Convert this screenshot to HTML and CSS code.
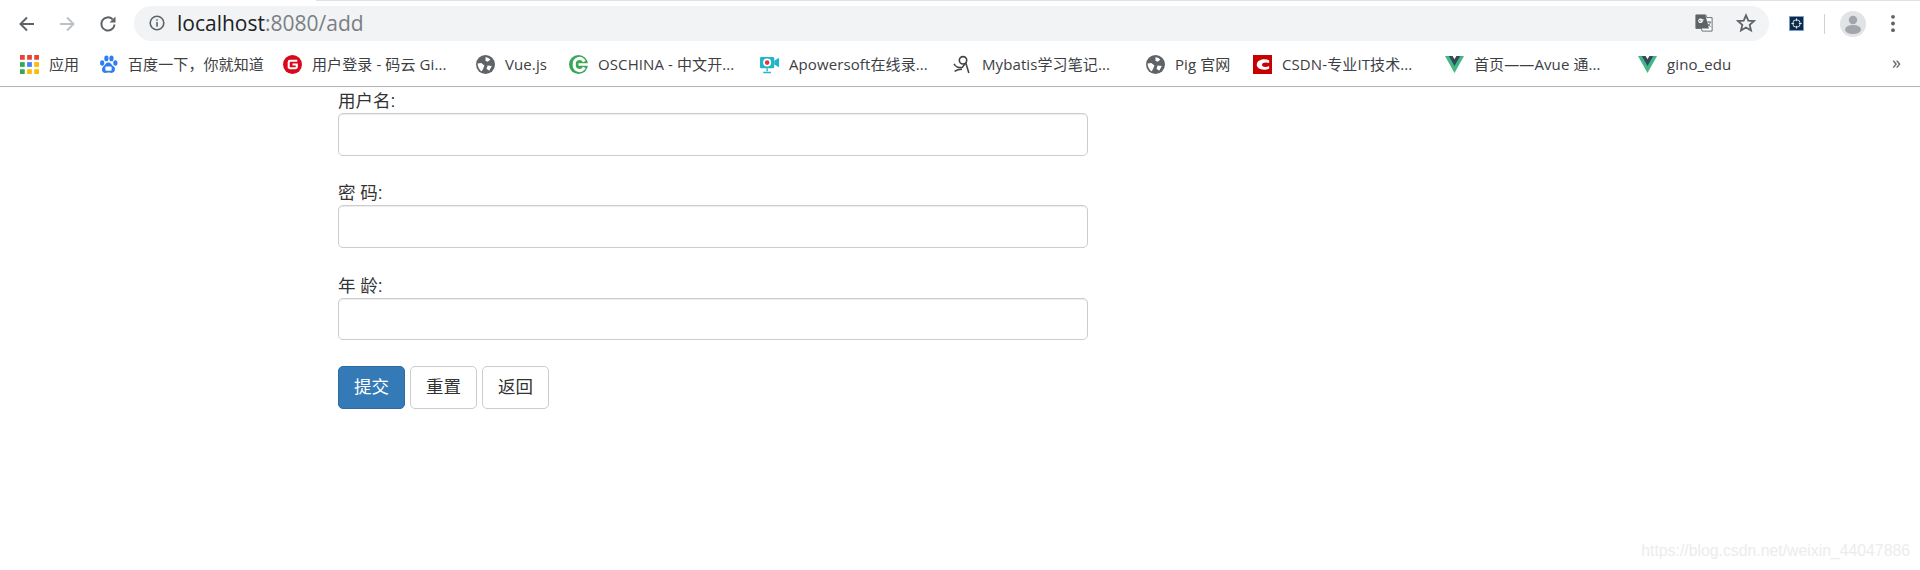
FILE: index.html
```html
<!DOCTYPE html>
<html lang="zh-CN">
<head>
<meta charset="utf-8">
<title>localhost:8080/add</title>
<link rel="stylesheet" href="styles.css">
</head>
<body>
<header class="chrome">
  <div class="tabline"></div>
  <div class="toolbar">
    <svg class="nav back" viewBox="0 0 20 20"><path d="M17 10H4M10 3.5 3.500 10l6.500 6.500" fill="none" stroke="#5f6368" stroke-width="2"/></svg>
    <svg class="nav forward" viewBox="0 0 20 20"><path d="M3 10h13M10 3.500 16.500 10 10 16.500" fill="none" stroke="#bdc1c6" stroke-width="2"/></svg>
    <svg class="nav reload" viewBox="0 0 20 20"><path d="M16.500 10.500a6.600 6.600 0 1 1-1.900-5.200" fill="none" stroke="#5f6368" stroke-width="2"/><path d="M17.500 2.500v6h-6z" fill="#5f6368"/></svg>
    <div class="omnibox">
      <svg class="info" viewBox="0 0 16 16"><circle cx="8" cy="8" r="6.800" fill="none" stroke="#5f6368" stroke-width="1.600"/><path d="M7.200 7h1.600v4.800H7.200zM7.200 4.200h1.600v1.600H7.200z" fill="#5f6368"/></svg>
      <div class="url"><span class="host">localhost</span>:8080/add</div>
      <svg class="translate" viewBox="0 0 20 20"><path d="M1 1h11l1 3h6v15H8l-1-3H1z" fill="#fff" stroke="#5f6368"/><path d="M1 1h10.500l4 15H1z" fill="#5f6368"/><path d="M9.500 6.500H6.500v1.500h1.600a2 2 0 1 1-.6-2" fill="none" stroke="#fff" stroke-width="1.200"/><path d="M13 9h5M15.500 8v1M17 9c-.5 2.500-2 4-3.500 5M14 10.500c.8 1.500 2 2.800 3.500 3.500" fill="none" stroke="#5f6368"/></svg>
      <svg class="star" viewBox="0 0 20 20"><path d="M10 2.300l2.300 5.300 5.700.5-4.300 3.800 1.300 5.600-5-3-5 3 1.300-5.600L2 8.100l5.700-.5z" fill="none" stroke="#5f6368" stroke-width="1.800"/></svg>
    </div>
    <svg class="ext" viewBox="0 0 16 16"><rect width="16" height="16" fill="#0e2a47"/><rect x=".5" y=".5" width="15" height="15" fill="none" stroke="#7fa6d8"/><circle cx="8" cy="8" r="4" fill="none" stroke="#dfe9f5"/><path d="M8 2.500v3M8 10.500v3M2.500 8h3M10.500 8h3" stroke="#dfe9f5"/></svg>
    <div class="divider"></div>
    <svg class="avatar" viewBox="0 0 26 26"><circle cx="13" cy="13" r="13" fill="#e1e3e6"/><circle cx="13" cy="9" r="4.200" fill="#a2a5a9"/><ellipse cx="13" cy="18.500" rx="8" ry="4.500" fill="#a2a5a9"/></svg>
    <svg class="menu" viewBox="0 0 6 20"><circle cx="3" cy="3" r="2" fill="#5f6368"/><circle cx="3" cy="10" r="2" fill="#5f6368"/><circle cx="3" cy="17" r="2" fill="#5f6368"/></svg>
  </div>
  <nav class="bookmarks">
    <a class="bm">
      <svg class="ic" viewBox="0 0 16 16"><rect width="4" height="4" fill="#ea4335"/><rect x="6" width="4" height="4" fill="#ea4335"/><rect x="12" width="4" height="4" fill="#ea4335"/><rect y="6" width="4" height="4" fill="#34a853"/><rect x="6" y="6" width="4" height="4" fill="#4285f4"/><rect x="12" y="6" width="4" height="4" fill="#fbbc05"/><rect y="12" width="4" height="4" fill="#34a853"/><rect x="6" y="12" width="4" height="4" fill="#fbbc05"/><rect x="12" y="12" width="4" height="4" fill="#fbbc05"/></svg>
      <span class="bm-text">应用</span>
    </a>
    <a class="bm">
      <svg class="ic" viewBox="0 0 18 18"><g fill="#2f7ef0"><ellipse cx="3" cy="7.500" rx="2" ry="2.600"/><ellipse cx="7" cy="3.200" rx="2" ry="2.700"/><ellipse cx="11.800" cy="3.200" rx="2" ry="2.700"/><ellipse cx="15.500" cy="7.500" rx="2" ry="2.600"/><path d="M9 7c2.500 0 3 2.500 5 4s1.500 6-2 6c-1.500 0-2-.4-3-.4s-1.500.4-3 .4c-3.500 0-4-4-2-6s2.500-4 5-4z"/></g><rect x="6" y="11" width="6" height="4" rx="1" fill="#fff"/></svg>
      <span class="bm-text">百度一下，你就知道</span>
    </a>
    <a class="bm">
      <svg class="ic" viewBox="0 0 20 20"><circle cx="10" cy="10" r="10" fill="#d6091d"/><path d="M15 6H7.500A1.500 1.500 0 0 0 6 7.500v5A1.500 1.500 0 0 0 7.500 14H13a1.500 1.500 0 0 0 1.500-1.500V10H10" fill="none" stroke="#fff" stroke-width="2.200"/></svg>
      <span class="bm-text">用户登录 - 码云 Gi...</span>
    </a>
    <a class="bm">
      <svg class="ic" viewBox="0 0 18 18"><use href="#globe"/></svg>
      <span class="bm-text">Vue.js</span>
    </a>
    <a class="bm">
      <svg class="ic" viewBox="0 0 18 18"><circle cx="9" cy="9" r="9" fill="#3aa757"/><path d="M14.500 6.200A5 5 0 0 0 5 9a5 5 0 0 0 9.500 2.800" fill="none" stroke="#fff" stroke-width="3"/><rect x="9" y="7.800" width="9" height="2.400" fill="#fff"/></svg>
      <span class="bm-text">OSCHINA - 中文开...</span>
    </a>
    <a class="bm">
      <svg class="ic" viewBox="0 0 20 20"><rect x="0" y="2" width="15" height="12" rx="1.500" fill="#22b5c8"/><path d="M15 6l5-3v10l-5-3z" fill="#22b5c8"/><circle cx="7.500" cy="8" r="4.200" fill="#fff"/><circle cx="7.500" cy="8" r="2.400" fill="#e5343d"/><path d="M7.500 14v3M3.500 18.500h8" stroke="#22b5c8" stroke-width="1.500"/></svg>
      <span class="bm-text">Apowersoft在线录...</span>
    </a>
    <a class="bm">
      <svg class="ic" viewBox="0 0 18 18"><circle cx="9.500" cy="5" r="3.500" fill="none" stroke="#444" stroke-width="1.500"/><path d="M1 8.500c1.500 3 5 4 8 3l2.500-3.500M12 7l3 10M1.500 15.500c2-1.500 4.500-2 7-2" fill="none" stroke="#444" stroke-width="1.500"/></svg>
      <span class="bm-text">Mybatis学习笔记...</span>
    </a>
    <a class="bm">
      <svg class="ic" viewBox="0 0 18 18"><use href="#globe"/></svg>
      <span class="bm-text">Pig 官网</span>
    </a>
    <a class="bm">
      <svg class="ic" viewBox="0 0 20 20"><rect width="20" height="20" fill="#c90000"/><path d="M17 5.500C12 3.500 5 4.500 4 9.500s7 7.500 13 5v-3c-3 1.600-7.500 1.500-7.500-1.200S14 7.300 17 8.500z" fill="#fff"/></svg>
      <span class="bm-text">CSDN-专业IT技术...</span>
    </a>
    <a class="bm">
      <svg class="ic" viewBox="0 0 20 18"><use href="#vue"/></svg>
      <span class="bm-text">首页——Avue 通...</span>
    </a>
    <a class="bm">
      <svg class="ic" viewBox="0 0 20 18"><use href="#vue"/></svg>
      <span class="bm-text">gino_edu</span>
    </a>
    <span class="more">»</span>
  </nav>
  <svg class="defs" aria-hidden="true">
    <defs>
      <g id="globe"><circle cx="9" cy="9" r="9" fill="#5f6368"/><path d="M9 2c2 .5 3.500 1 4.500 2.500l-2.500 2-2-1zM1.500 8l3.500-.5 3 2.500-1 2.500-1.500 3c-2-1-4-4.500-4-7.500zM11 10l4 .5-2.500 4.500-2.500-2z" fill="#fff"/></g>
      <g id="vue"><path d="M0 0h7l3 5 3-5h7L10 18z" fill="#41b883"/><path d="M4 0h4l2 3.500L12 0h4l-6 10.500z" fill="#35495e"/></g>
    </defs>
  </svg>
</header>
<main class="page">
  <form class="form">
    <div class="group">
      <label class="label">用户名:</label>
      <input class="control" type="text">
    </div>
    <div class="group">
      <label class="label">密 码:</label>
      <input class="control" type="password">
    </div>
    <div class="group">
      <label class="label">年 龄:</label>
      <input class="control" type="text">
    </div>
    <div class="actions">
      <button class="btn primary" type="button">提交</button>
      <button class="btn" type="button">重置</button>
      <button class="btn" type="button">返回</button>
    </div>
  </form>
</main>
<footer class="watermark">https://blog.csdn.net/weixin_44047886</footer>
</body>
</html>
```
FILE: styles.css
```css
* { box-sizing: border-box; }
html, body { margin: 0; height: 100%; background: #fff; overflow: hidden; }
body {
  position: relative;
  font-family: "Liberation Sans", "Noto Sans CJK SC", sans-serif;
  color: #333;
}
.chrome { height: 87px; border-bottom: 1px solid #b4b4b4; background: #fff; }
.tabline { height: 1px; margin-left: 316px; background: #dee1e6; }
.toolbar { height: 45px; display: flex; align-items: center; padding-left: 17px; }
.nav { width: 20px; height: 20px; flex: none; }
.forward { margin-left: 20px; }
.reload { margin-left: 21px; }
.omnibox {
  width: 1635px;
  height: 35px;
  margin-left: 16px;
  margin-top: -1px;
  background: #f1f3f4;
  border-radius: 18px;
  display: flex;
  align-items: center;
  padding-left: 15px;
}
.info { width: 16px; height: 16px; flex: none; }
.url { margin-left: 12px; font: 21px/1 "Open Sans", sans-serif; color: #7a7f85; flex: 1; }
.host { color: #202124; }
.translate { width: 18px; height: 18px; margin-right: 23px; }
.star { width: 20px; height: 20px; margin-right: 13px; }
.ext { width: 15px; height: 15px; margin-left: 20px; flex: none; }
.divider { width: 1px; height: 20px; margin-left: 20px; background: #d0d2d5; flex: none; }
.avatar { width: 26px; height: 26px; margin-left: 15px; flex: none; }
.menu { width: 6px; height: 19px; margin-left: 24px; flex: none; }
.bookmarks {
  height: 36px;
  padding-left: 20px;
  display: grid;
  grid-template-columns: 79px 184px 193px 93px 191px 193px 193px 107px 192px 193px 1fr 28px;
  align-items: center;
  font: 15px/1 "Open Sans", "Noto Sans CJK SC", sans-serif;
  color: #3c4043;
}
.bm { display: flex; align-items: center; white-space: nowrap; }
.ic { width: 19px; height: 19px; flex: none; }
.bm-text { margin: 1px 0 0 10px; letter-spacing: .1px; }
.more { font-size: 18px; color: #5f6368; margin-top: -4px; }
.defs { display: none; }
.page { padding: 0 0 0 338px; }
.form { width: 750px; }
.group { margin-bottom: 23.750px; }
.label {
  display: block;
  height: 26px;
  font-size: 17.500px;
  line-height: 29px;
}
.control {
  display: block;
  width: 100%;
  height: 42.500px;
  border: 1px solid #ccc;
  border-radius: 5px;
  background: #fff;
  box-shadow: inset 0 1px 1px rgba(0, 0, 0, .075);
}
.actions { display: flex; gap: 5px; margin-top: 26px; }
.btn {
  width: 67px;
  height: 42.500px;
  padding: 0;
  border: 1px solid #ccc;
  border-radius: 5px;
  background: #fff;
  color: #333;
  font: 17.500px/1 "Liberation Sans", "Noto Sans CJK SC", sans-serif;
}
.primary { background: #337ab7; border-color: #2e6da4; color: #fff; }
.watermark {
  position: absolute;
  right: 10px;
  bottom: 11px;
  font: 15.800px/1 "Liberation Sans", sans-serif;
  color: #ececec;
}
```
